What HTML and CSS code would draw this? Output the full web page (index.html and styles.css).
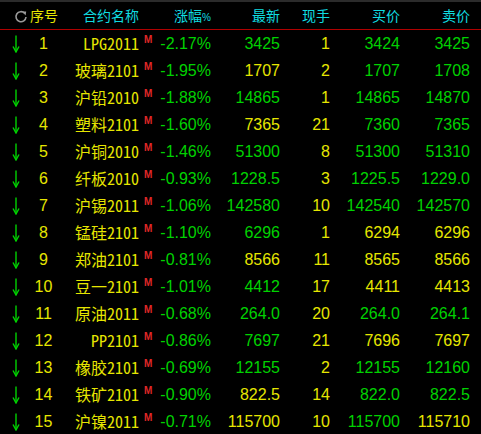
FILE: index.html
```html
<!DOCTYPE html>
<html>
<head>
<meta charset="utf-8">
<link rel="stylesheet" href="styles.css">
</head>
<body>
<div class="board">
  <div class="row head">
    <div class="c-ico"><svg class="refresh" width="14" height="14" viewBox="0 0 14 14"><path d="M10.6 3.2 A5 5 0 1 0 12 7" fill="none" stroke="#9a9a9a" stroke-width="1.6"/><path d="M8.2 1.6 L12.2 1.4 L11.6 5.4 Z" fill="#9a9a9a"/></svg></div>
    <div class="c-num hd">序号</div>
    <div class="c-name hd">合约名称</div>
    <div class="c-r hd pcth">涨幅<span class="pc">%</span></div>
    <div class="c-r hd">最新</div>
    <div class="c-r hd">现手</div>
    <div class="c-r hd">买价</div>
    <div class="c-r hd">卖价</div>
  </div>
  <div id="rows"></div>
</div>
<script src="app.js"></script>
</body>
</html>
```

FILE: styles.css
```css
html, body { margin: 0; padding: 0; background: #000; }
body { width: 481px; height: 434px; overflow: hidden; }
.board { border-top: 2px solid #2b2b2b; }
.row {
  display: grid;
  grid-template-columns: 30px 27px 98px 56px 69px 50px 70px 70px 11px;
  height: 27px;
  line-height: 27px;
  font-family: "Liberation Sans", Arial, sans-serif;
  font-size: 16px;
  white-space: nowrap;
}
.row.head { height: 27px; border-bottom: 1px solid #b00000; }
.hd {
  color: #10dce0;
  font-family: "Noto Sans CJK SC", sans-serif;
  font-size: 14px;
}
.pc { font-size: 10px; font-family: "Liberation Sans", sans-serif; }
.c-ico { display: flex; align-items: center; padding-left: 14px; }
.c-arrow { display: flex; align-items: center; padding-left: 12px; }
.c-num { text-align: center; color: #e6e600; }
.c-name {
  display: flex; justify-content: flex-end; padding-right: 16px;
  color: #e6e600;
  font-family: "Noto Sans Mono CJK SC", "Noto Sans CJK SC", monospace;
}
.c-name.hd { color: #10dce0; font-family: "Noto Sans CJK SC", sans-serif; }
.cell-name { display: flex; justify-content: flex-end; position: relative; }
.nm { color: #e6e600; font-family: "Noto Sans Mono CJK SC", "Noto Sans CJK SC", monospace; }
.m {
  position: absolute; left: calc(100% + 5px); top: 5px;
  color: #e02828; font-family: "Liberation Sans", Arial, sans-serif;
  font-size: 10px; font-weight: bold; line-height: 10px;
}
.c-r { text-align: right; }
.g { color: #00d200; }
.y { color: #e6e600; }
```

FILE: app.js
```js
var data = [
  ["LPG2011","-2.17%","3425","g","1","3424","g","3425","g"],
  ["玻璃2101","-1.95%","1707","y","2","1707","g","1708","g"],
  ["沪铅2010","-1.88%","14865","g","1","14865","g","14870","g"],
  ["塑料2101","-1.60%","7365","y","21","7360","g","7365","g"],
  ["沪铜2010","-1.46%","51300","g","8","51300","g","51310","g"],
  ["纤板2010","-0.93%","1228.5","g","3","1225.5","g","1229.0","g"],
  ["沪锡2011","-1.06%","142580","g","10","142540","g","142570","g"],
  ["锰硅2101","-1.10%","6296","g","1","6294","y","6296","y"],
  ["郑油2101","-0.81%","8566","y","11","8565","y","8566","y"],
  ["豆一2101","-1.01%","4412","g","17","4411","y","4413","y"],
  ["原油2011","-0.68%","264.0","g","20","264.0","g","264.1","g"],
  ["PP2101","-0.86%","7697","g","21","7696","y","7697","y"],
  ["橡胶2101","-0.69%","12155","g","2","12155","g","12160","g"],
  ["铁矿2101","-0.90%","822.5","y","14","822.0","g","822.5","g"],
  ["沪镍2011","-0.71%","115700","y","10","115700","g","115710","y"]
];
var html = "";
data.forEach(function (d, i) {
  html += '<div class="row">' +
    '<div class="c-arrow"><svg width="8" height="18" viewBox="0 0 8 18"><path d="M4 0.5 V17" stroke="#00d200" stroke-width="1.4" fill="none"/><path d="M1 11.5 L4 17 L7 11.5" stroke="#00d200" stroke-width="1.4" fill="none"/></svg></div>' +
    '<div class="c-num">' + (i + 1) + '</div>' +
    '<div class="c-name"><span class="cell-name"><span class="nm">' + d[0] + '</span><span class="m">M</span></span></div>' +
    '<div class="c-r g">' + d[1] + '</div>' +
    '<div class="c-r ' + d[3] + '">' + d[2] + '</div>' +
    '<div class="c-r y">' + d[4] + '</div>' +
    '<div class="c-r ' + d[6] + '">' + d[5] + '</div>' +
    '<div class="c-r ' + d[8] + '">' + d[7] + '</div>' +
    '<div></div>' +
  '</div>';
});
document.getElementById("rows").innerHTML = html;
```
